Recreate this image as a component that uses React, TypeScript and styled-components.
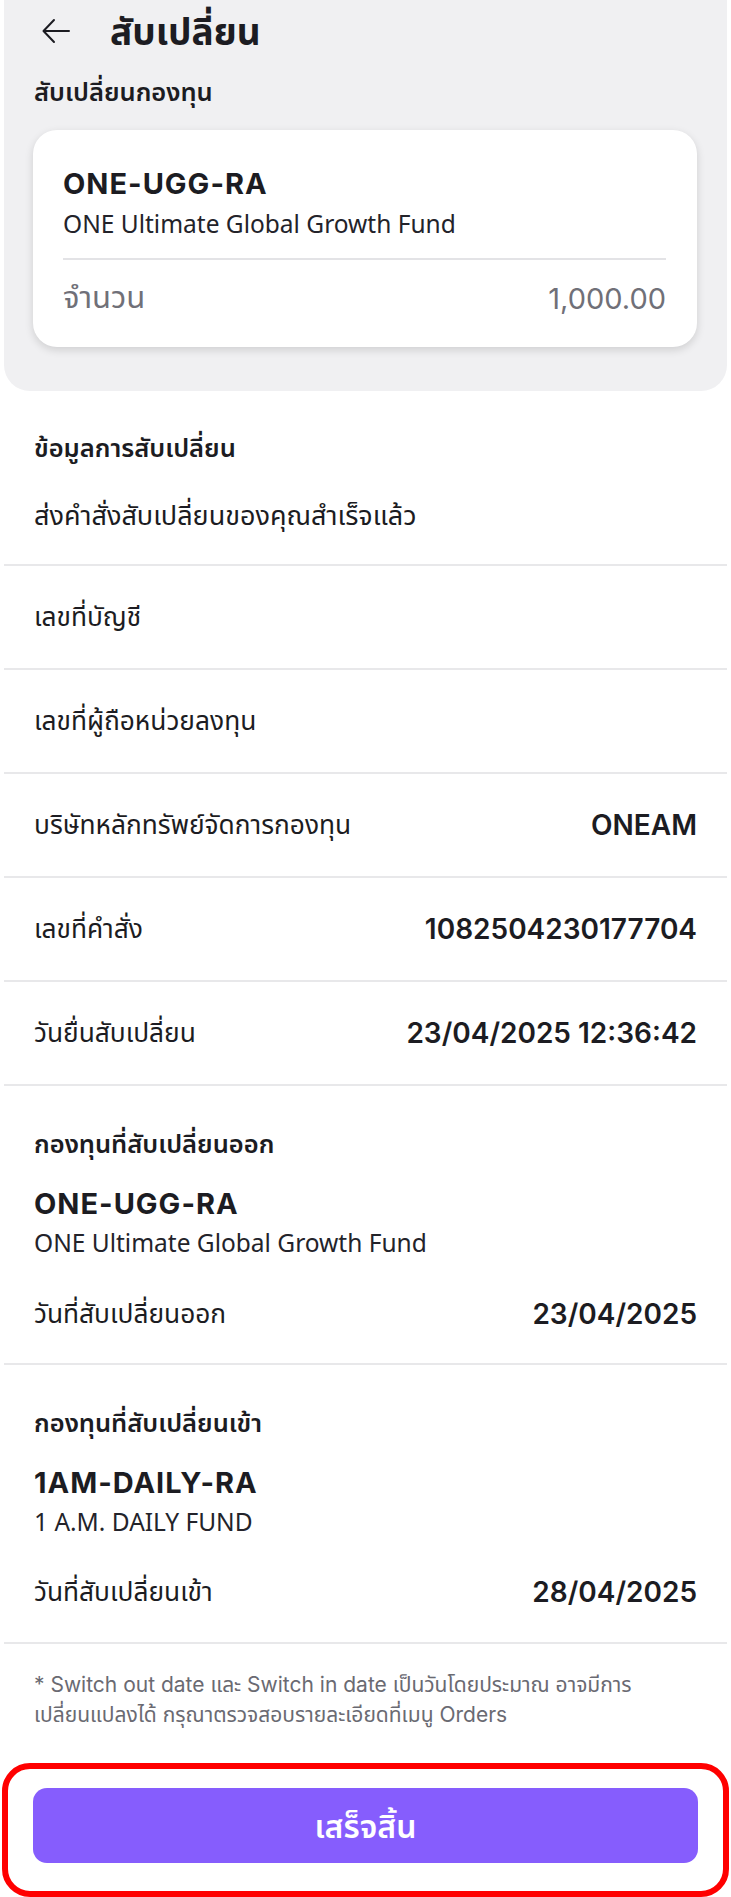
import React from "react";
import styled, { createGlobalStyle } from "styled-components";

const GlobalStyle = createGlobalStyle`
  body {
    margin: 0;
    background: #ffffff;
    font-family: Inter, "Noto Sans Thai", "Noto Sans", sans-serif;
    color: #1c1c22;
  }
  * { box-sizing: border-box; }
`;

const Page = styled.div`
  width: 731px;
  padding: 0 4px;
`;

const HeaderPanel = styled.div`
  background: #f0f0f2;
  border-radius: 0 0 26px 26px;
  padding: 0 30px 44px 29px;
`;

const TopBar = styled.div`
  height: 62px;
  display: flex;
  align-items: center;
  gap: 38px;
  padding-left: 7px;
`;

const BackButton = styled.button`
  border: none;
  background: none;
  padding: 0;
  width: 32px;
  height: 32px;
  display: flex;
  align-items: center;
  justify-content: center;
  color: #1c1c22;
`;

const Title = styled.h1`
  margin: 0;
  font-size: 37px;
  font-weight: 700;
  line-height: 1;
`;

const PanelLabel = styled.div`
  font-size: 25.5px;
  font-weight: 600;
  line-height: 60px;
  height: 68px;
  padding-left: 1px;
`;

const Card = styled.div`
  background: #ffffff;
  border-radius: 24px;
  box-shadow: 0 3px 8px rgba(0, 0, 0, 0.14);
  padding: 34px 31px 0 30px;
  height: 217px;
`;

const FundCode = styled.div`
  font-size: 29px;
  font-weight: 700;
  line-height: 40px;
  letter-spacing: 1px;
`;

const FundName = styled.div`
  font-family: "Noto Sans", "Noto Sans Thai", sans-serif;
  font-size: 24.5px;
  font-weight: 400;
  line-height: 40px;
  color: #23232a;
`;

const CardDivider = styled.div`
  height: 2px;
  background: #e3e3e6;
  margin-top: 14px;
`;

const AmountRow = styled.div`
  display: flex;
  justify-content: space-between;
  align-items: center;
  height: 76px;
  font-size: 29px;
  color: #707078;
`;

const AmountLabel = styled.span`
  font-size: 31px;
`;

const Section = styled.div<{ $height: number }>`
  height: ${(p) => p.$height}px;
  padding: 0 30px;
  border-bottom: 2px solid #e8e8ea;
  display: flex;
  flex-direction: column;
`;

const SectionTitle = styled.div<{ $top: number }>`
  margin-top: ${(p) => p.$top}px;
  font-size: 25.5px;
  font-weight: 600;
  line-height: 40px;
`;

const Message = styled.div`
  margin-top: 28px;
  font-size: 27px;
  line-height: 40px;
`;

const Row = styled.div`
  height: 104px;
  padding: 0 30px;
  border-bottom: 2px solid #e8e8ea;
  display: flex;
  justify-content: space-between;
  align-items: center;
`;

const Label = styled.div`
  font-size: 26.3px;
  line-height: 40px;
`;

const Value = styled.div`
  font-size: 28px;
  font-weight: 600;
  line-height: 40px;
`;

const SubCode = styled(FundCode)`
  margin-top: 20px;
`;

const SubName = styled(FundName)`
  line-height: 38px;
`;

const DateRow = styled.div<{ $top: number }>`
  margin-top: ${(p) => p.$top}px;
  display: flex;
  justify-content: space-between;
  align-items: center;
`;

const Note = styled.p`
  margin: 26px 30px 0;
  font-size: 21px;
  line-height: 30px;
  color: #6a6a72;
`;

const Footer = styled.div`
  margin: 33px -2px 0;
  border: 6px solid #ff0000;
  border-radius: 28px;
  padding: 19px 25px 28px;
`;

const PrimaryButton = styled.button`
  width: 100%;
  height: 75px;
  border: none;
  border-radius: 14px;
  background: #865dfd;
  color: #ffffff;
  font-family: inherit;
  font-size: 32px;
  font-weight: 600;
  padding: 4px 0 0;
`;

const details = [
  { label: "เลขที่บัญชี", value: "" },
  { label: "เลขที่ผู้ถือหน่วยลงทุน", value: "" },
  { label: "บริษัทหลักทรัพย์จัดการกองทุน", value: "ONEAM" },
  { label: "เลขที่คำสั่ง", value: "1082504230177704" },
  { label: "วันยื่นสับเปลี่ยน", value: "23/04/2025 12:36:42" },
];

const ArrowLeft = () => (
  <svg width="30" height="26" viewBox="0 0 30 26" fill="none">
    <path
      d="M28 13H3M13 2L2.5 13 13 24"
      stroke="currentColor"
      strokeWidth="2"
      strokeLinecap="round"
      strokeLinejoin="round"
    />
  </svg>
);

export default function App() {
  return (
    <>
      <GlobalStyle />
      <Page>
        <HeaderPanel>
          <TopBar>
            <BackButton aria-label="back">
              <ArrowLeft />
            </BackButton>
            <Title>สับเปลี่ยน</Title>
          </TopBar>
          <PanelLabel>สับเปลี่ยนกองทุน</PanelLabel>
          <Card>
            <FundCode>ONE-UGG-RA</FundCode>
            <FundName>ONE Ultimate Global Growth Fund</FundName>
            <CardDivider />
            <AmountRow>
              <AmountLabel>จำนวน</AmountLabel>
              <span>1,000.00</span>
            </AmountRow>
          </Card>
        </HeaderPanel>

        <Section $height={175}>
          <SectionTitle $top={37}>ข้อมูลการสับเปลี่ยน</SectionTitle>
          <Message>ส่งคำสั่งสับเปลี่ยนของคุณสำเร็จแล้ว</Message>
        </Section>

        {details.map((d) => (
          <Row key={d.label}>
            <Label>{d.label}</Label>
            <Value>{d.value}</Value>
          </Row>
        ))}

        <Section $height={279}>
          <SectionTitle $top={38}>กองทุนที่สับเปลี่ยนออก</SectionTitle>
          <SubCode>ONE-UGG-RA</SubCode>
          <SubName>ONE Ultimate Global Growth Fund</SubName>
          <DateRow $top={32}>
            <Label>วันที่สับเปลี่ยนออก</Label>
            <Value>23/04/2025</Value>
          </DateRow>
        </Section>

        <Section $height={279}>
          <SectionTitle $top={38}>กองทุนที่สับเปลี่ยนเข้า</SectionTitle>
          <SubCode>1AM-DAILY-RA</SubCode>
          <SubName>1 A.M. DAILY FUND</SubName>
          <DateRow $top={31}>
            <Label>วันที่สับเปลี่ยนเข้า</Label>
            <Value>28/04/2025</Value>
          </DateRow>
        </Section>

        <Note>
          * Switch out date และ Switch in date เป็นวันโดยประมาณ อาจมีการ
          <br />
          เปลี่ยนแปลงได้ กรุณาตรวจสอบรายละเอียดที่เมนู Orders
        </Note>

        <Footer>
          <PrimaryButton>เสร็จสิ้น</PrimaryButton>
        </Footer>
      </Page>
    </>
  );
}
